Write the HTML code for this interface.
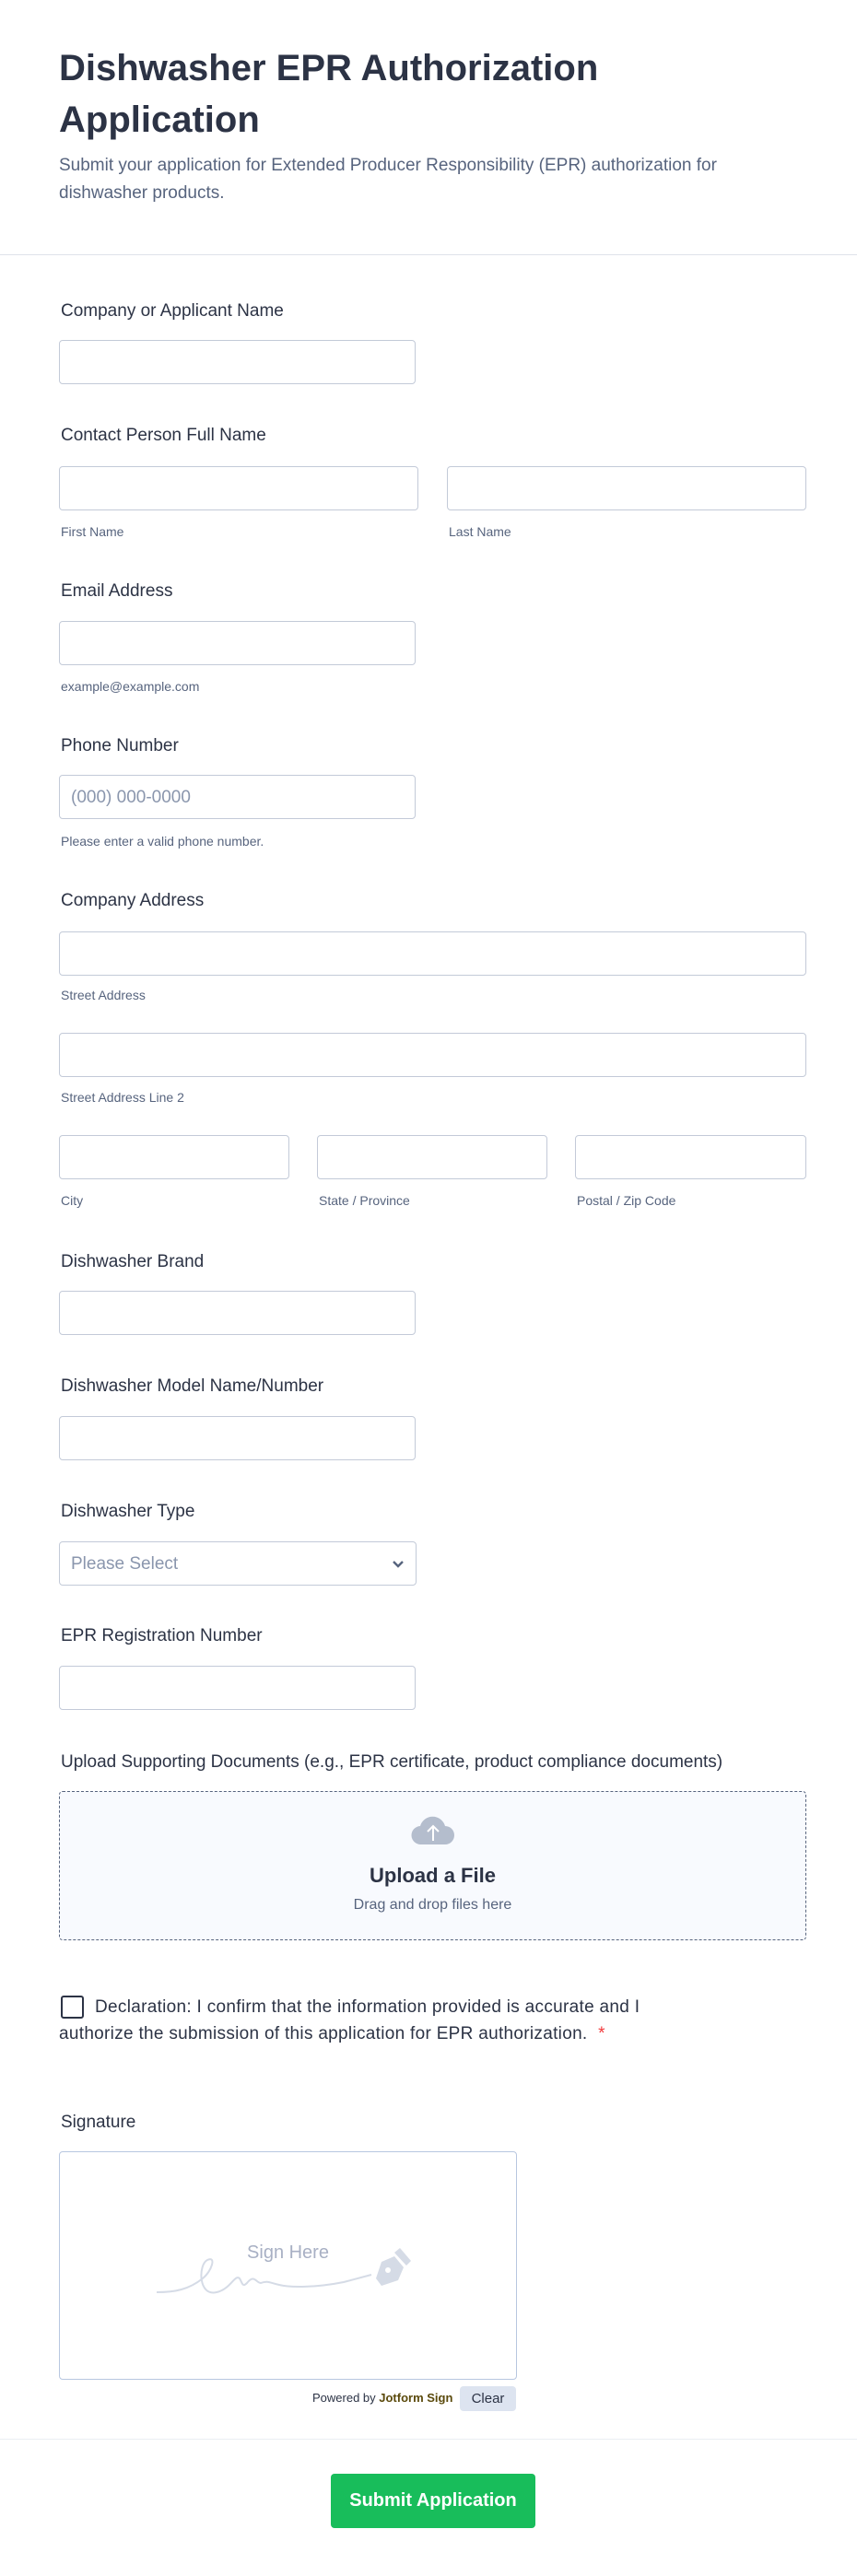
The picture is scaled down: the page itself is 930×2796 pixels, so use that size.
<!DOCTYPE html>
<html><head><meta charset="utf-8"><style>
*{box-sizing:border-box;margin:0;padding:0}
body{width:930px;height:2796px;background:#fff;font-family:"Liberation Sans",sans-serif;color:#2c3345;position:relative;overflow:hidden}
.a{position:absolute}
h1{position:absolute;left:64px;top:46px;font-size:40px;line-height:56px;font-weight:bold;color:#2c3345;width:760px}
.sub{left:64px;top:165px;font-size:19px;line-height:30px;color:#57647e;width:790px}
.hr{left:0;width:930px;height:1px;background:#dfe3ea}
.lab{font-size:19px;color:#2c3345;left:66px}
.in{border:1px solid #c3cad8;border-radius:4px;height:48px;background:#fff}
.sm{font-size:14px;color:#57647e}
</style></head><body>
<h1>Dishwasher EPR Authorization Application</h1>
<div class="a sub">Submit your application for Extended Producer Responsibility (EPR) authorization for dishwasher products.</div>
<div class="a hr" style="top:276px"></div>

<div class="a lab" style="top:327px">Company or Applicant Name</div>
<div class="a in" style="left:64px;top:369px;width:387px"></div>

<div class="a lab" style="top:462px">Contact Person Full Name</div>
<div class="a in" style="left:64px;top:506px;width:390px"></div>
<div class="a in" style="left:485px;top:506px;width:390px"></div>
<div class="a sm" style="left:66px;top:569px">First Name</div>
<div class="a sm" style="left:487px;top:569px">Last Name</div>

<div class="a lab" style="top:631px">Email Address</div>
<div class="a in" style="left:64px;top:674px;width:387px"></div>
<div class="a sm" style="left:66px;top:737px">example@example.com</div>

<div class="a lab" style="top:799px">Phone Number</div>
<div class="a in" style="left:64px;top:841px;width:387px;padding:13px 12px;font-size:19px;color:#8a96ad">(000) 000-0000</div>
<div class="a sm" style="left:66px;top:905px">Please enter a valid phone number.</div>

<div class="a lab" style="top:967px">Company Address</div>
<div class="a in" style="left:64px;top:1011px;width:811px"></div>
<div class="a sm" style="left:66px;top:1072px">Street Address</div>
<div class="a in" style="left:64px;top:1121px;width:811px"></div>
<div class="a sm" style="left:66px;top:1183px">Street Address Line 2</div>
<div class="a in" style="left:64px;top:1232px;width:250px"></div>
<div class="a in" style="left:344px;top:1232px;width:250px"></div>
<div class="a in" style="left:624px;top:1232px;width:251px"></div>
<div class="a sm" style="left:66px;top:1295px">City</div>
<div class="a sm" style="left:346px;top:1295px">State / Province</div>
<div class="a sm" style="left:626px;top:1295px">Postal / Zip Code</div>

<div class="a lab" style="top:1359px">Dishwasher Brand</div>
<div class="a in" style="left:64px;top:1401px;width:387px"></div>
<div class="a lab" style="top:1494px">Dishwasher Model Name/Number</div>
<div class="a in" style="left:64px;top:1537px;width:387px"></div>
<div class="a lab" style="top:1630px">Dishwasher Type</div>
<div class="a in" style="left:64px;top:1673px;width:388px;padding:13px 12px;font-size:19px;color:#8a96ad">Please Select
<svg class="a" style="right:12px;top:19px" width="14" height="10" viewBox="0 0 14 10"><path d="M2 2l5 5 5-5" fill="none" stroke="#57647e" stroke-width="2.4"/></svg></div>
<div class="a lab" style="top:1765px">EPR Registration Number</div>
<div class="a in" style="left:64px;top:1808px;width:387px"></div>

<div class="a lab" style="top:1902px">Upload Supporting Documents (e.g., EPR certificate, product compliance documents)</div>
<div class="a" style="left:64px;top:1944px;width:811px;height:162px;border:1px dashed #57647e;border-radius:4px;background:#f8fafe"></div>
<svg class="a" style="left:445px;top:1968px" width="50" height="36" viewBox="0 0 50 36"><path d="M12 34a10 10 0 0 1-1-20 14 14 0 0 1 27 0 10 10 0 0 1 0 20z" fill="#b4bdcd"/><path d="M25 30V14M19 20l6-6 6 6" fill="none" stroke="#fff" stroke-width="2"/></svg>
<div class="a" style="left:64px;width:811px;top:2023px;text-align:center;font-size:22px;font-weight:bold;color:#2c3345">Upload a File</div>
<div class="a" style="left:64px;width:811px;top:2059px;text-align:center;font-size:16px;color:#57647e">Drag and drop files here</div>

<div class="a" style="left:66px;top:2166px;width:25px;height:25px;border:2px solid #2c3345;border-radius:3px"></div>
<div class="a" style="left:64px;top:2164px;font-size:19px;line-height:29px;color:#2c3345;width:680px;text-indent:39px;letter-spacing:0.3px">Declaration: I confirm that the information provided is accurate and I authorize the submission of this application for EPR authorization. <span style="color:#f23a3c;margin-left:6px">*</span></div>

<div class="a lab" style="top:2293px">Signature</div>
<div class="a" style="left:64px;top:2335px;width:497px;height:248px;border:1px solid #b8c7e0;border-radius:4px"></div>
<div class="a" style="left:64px;width:497px;top:2434px;text-align:center;font-size:20px;color:#a8b0c4">Sign Here</div>
<svg class="a" style="left:165px;top:2428px" width="290" height="70" viewBox="0 0 290 70"><path d="M5 60c20 0 35-3 50-15 10-8 15-25 5-20-10 5-10 40 10 35 15-3 20-20 25-15 3 5 3 10 8 5 8-10 10 0 15 0 8-3 10 0 20 2 12 3 40 3 70-3l30-8" fill="none" stroke="#d5dbe6" stroke-width="2"/><path d="M243 45l6-18 14-6 10 12-6 14-18 6z" fill="#d5dbe6"/><path d="M263 17l6-5 12 14-5 5z" fill="#d5dbe6"/><circle cx="256" cy="36" r="3" fill="#fff"/></svg>
<div class="a" style="left:339px;top:2595px;font-size:13px;color:#2c3345">Powered by <b style="color:#5b4a0c">Jotform Sign</b></div>
<div class="a" style="left:499px;top:2590px;width:61px;height:27px;background:#dde4f0;border-radius:4px;font-size:15px;text-align:center;line-height:27px;color:#2c3345">Clear</div>

<div class="a hr" style="top:2647px;background:#ebeef3"></div>
<div class="a" style="left:359px;top:2685px;width:222px;height:59px;background:#18bd5b;border-radius:4px;color:#fff;font-size:20px;font-weight:bold;text-align:center;line-height:59px">Submit Application</div>
</body></html>
